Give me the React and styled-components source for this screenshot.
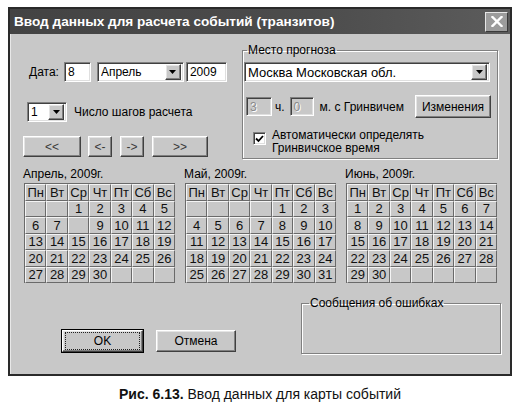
import React from "react";
import styled, { createGlobalStyle } from "styled-components";

const GlobalStyle = createGlobalStyle`
  html, body { margin: 0; padding: 0; background: #fff; }
  body {
    font-family: "Liberation Sans", Arial, sans-serif;
    font-size: 12px;
    color: #000;
  }
  * { box-sizing: border-box; }
`;

const FACE = "#c8c8c8";

const Page = styled.div`
  width: 519px;
  height: 409px;
  padding: 7px 0 0 8px;
`;

const Window = styled.div`
  width: 504px;
  height: 369px;
  border: 2px solid #2a2a2a;
  background: ${FACE};
  display: flex;
  flex-direction: column;
  box-shadow: inset 1px 1px 0 #e8e8e8;
`;

const TitleBar = styled.div`
  height: 25px;
  flex: none;
  display: flex;
  align-items: center;
  justify-content: space-between;
  padding: 0 2px 0 4px;
  background: linear-gradient(to right, #434343 0%, #4c4c4c 60%, #5c5c5c 100%);
  color: #fff;
  font-weight: bold;
  font-size: 13.6px;
`;

const CloseButton = styled.div`
  width: 23px;
  height: 20px;
  display: flex;
  align-items: center;
  justify-content: center;
  background: #9c9c9c;
  border: 1px solid;
  border-color: #e6e6e6 #3a3a3a #3a3a3a #e6e6e6;
`;

const Body = styled.div`
  flex: 1;
  display: flex;
  flex-direction: column;
  padding: 0 9px 0 14px;
`;

const TopSection = styled.div`
  display: flex;
  align-items: flex-start;
`;

const LeftColumn = styled.div`
  width: 218px;
  flex: none;
  padding-top: 28px;
  display: flex;
  flex-direction: column;
`;

const Row = styled.div`
  display: flex;
  align-items: center;
  height: ${(p) => p.$h || 20}px;
  margin-top: ${(p) => p.$mt || 0}px;
  margin-left: ${(p) => p.$ml || 0}px;
`;

const Label = styled.span`
  white-space: nowrap;
  margin-left: ${(p) => p.$ml || 0}px;
  margin-right: ${(p) => p.$mr || 0}px;
  font-size: ${(p) => p.$fs || 12}px;
`;

const sunken = `
  border: 1px solid;
  border-color: #808080 #ffffff #ffffff #808080;
  box-shadow: inset 1px 1px 0 #404040, inset -1px -1px 0 #dfdfdf;
`;

const raised = `
  border: 1px solid;
  border-color: #ffffff #404040 #404040 #ffffff;
  box-shadow: inset -1px -1px 0 #808080, inset 1px 1px 0 #e4e4e4;
`;

const TextBox = styled.div`
  ${sunken}
  width: ${(p) => p.$w}px;
  height: ${(p) => p.$h || 20}px;
  margin-left: ${(p) => p.$ml || 0}px;
  background: ${(p) => (p.$disabled ? FACE : "#fff")};
  color: ${(p) => (p.$disabled ? "#8a8a8a" : "#000")};
  text-shadow: ${(p) => (p.$disabled ? "1px 1px 0 #fff" : "none")};
  padding: 0 3px;
  display: flex;
  align-items: center;
  font-size: ${(p) => p.$fs || 12}px;
  white-space: nowrap;
  overflow: hidden;
`;

const Combo = styled.div`
  ${sunken}
  width: ${(p) => p.$w}px;
  height: 20px;
  background: #fff;
  display: flex;
  align-items: center;
  padding: 0 2px 0 3px;
  font-size: ${(p) => p.$fs || 12}px;
  margin-left: ${(p) => p.$ml || 0}px;
  margin-top: ${(p) => p.$mt || 0}px;
`;

const ComboText = styled.span`
  flex: 1;
  white-space: nowrap;
  overflow: hidden;
`;

const ComboArrow = styled.div`
  ${raised}
  width: 16px;
  height: 16px;
  background: ${FACE};
  display: flex;
  align-items: center;
  justify-content: center;
  flex: none;
`;

const Button = styled.div`
  ${raised}
  width: ${(p) => p.$w}px;
  height: ${(p) => p.$h || 21}px;
  background: ${FACE};
  display: flex;
  align-items: center;
  justify-content: center;
  font-size: 12px;
  color: ${(p) => (p.$muted ? "#3a3a3a" : "#000")};
  margin-left: ${(p) => (p.$push ? "auto" : `${p.$ml || 0}px`)};
  margin-right: ${(p) => p.$mr || 0}px;
  flex: none;
`;

const DefaultButton = styled(Button)`
  outline: 1px solid #000;
`;

const FocusRing = styled.span`
  border: 1px dotted #222;
  padding: 2px 28px;
  line-height: 12px;
`;

const Group = styled.fieldset`
  margin: ${(p) => p.$mt || 0}px 0 0 ${(p) => (p.$push ? "auto" : `${p.$ml || 0}px`)};
  padding: 0 0 ${(p) => p.$pb || 1}px 0;
  width: ${(p) => p.$w}px;
  height: ${(p) => (p.$h ? `${p.$h}px` : "auto")};
  border: 1px solid #808080;
  box-shadow: 1px 1px 0 #fff, inset 1px 1px 0 #fff;
  min-width: 0;
`;

const Legend = styled.legend`
  padding: 0 1px;
  margin-left: ${(p) => p.$ml || 3}px;
  font-size: 12px;
  line-height: 14px;
`;

const CheckRow = styled.div`
  display: flex;
  align-items: flex-start;
  margin: 11px 0 0 10px;
`;

const CheckBox = styled.div`
  ${sunken}
  width: 13px;
  height: 13px;
  background: #fff;
  margin-top: 3px;
  display: flex;
  align-items: center;
  justify-content: center;
  flex: none;
`;

const CheckText = styled.div`
  margin-left: 6px;
  line-height: 13px;
`;

const CalendarRow = styled.div`
  display: flex;
  justify-content: space-between;
  width: 473px;
  margin-top: 8px;
`;

const Month = styled.div`
  display: flex;
  flex-direction: column;
`;

const MonthTitle = styled.div`
  height: 14px;
  line-height: 14px;
  margin: 0 0 2px -1px;
  font-size: 12px;
`;

const DayGrid = styled.div`
  width: 151px;
  display: grid;
  grid-template-columns: repeat(7, 1fr);
  grid-auto-rows: 16.5px;
  border-top: 1px solid #6a6a6a;
  border-left: 1px solid #6a6a6a;
`;

const DayCell = styled.div`
  border-top: 1px solid #f4f4f4;
  border-left: 1px solid #f4f4f4;
  border-right: 1px solid #6a6a6a;
  border-bottom: 1px solid #6a6a6a;
  display: flex;
  align-items: center;
  justify-content: center;
  font-size: 13px;
  line-height: 1;
  color: #111;
`;

const BottomSection = styled.div`
  display: flex;
  align-items: flex-start;
  margin-top: 13px;
`;

const DialogButtons = styled.div`
  display: flex;
  gap: 13px;
  margin: 34px 0 0 38px;
`;

const Caption = styled.div`
  margin-top: 10px;
  width: 504px;
  text-align: center;
  font-size: 14px;
  color: #111;
  line-height: 16px;
`;

const Arrow = () => (
  <svg width="7" height="4" viewBox="0 0 7 4">
    <path d="M0 0h7L3.5 4z" fill="#000" />
  </svg>
);

const CloseGlyph = () => (
  <svg width="12" height="11" viewBox="0 0 12 11">
    <path d="M1.5 1l9 9M10.5 1l-9 9" stroke="#fff" strokeWidth="2.4" strokeLinecap="square" />
  </svg>
);

const Check = () => (
  <svg width="9" height="8" viewBox="0 0 9 8">
    <path d="M1 3.5l2.5 2.5L8 1" stroke="#000" strokeWidth="1.8" fill="none" />
  </svg>
);

const HEAD = ["Пн", "Вт", "Ср", "Чт", "Пт", "Сб", "Вс"];

const buildMonth = (offset, days, skip) => {
  const cells = [];
  for (let i = 0; i < offset; i++) cells.push("");
  for (let d = 1; d <= days; d++) cells.push(d === skip ? "" : d);
  while (cells.length < 35) cells.push("");
  return cells;
};

const MONTHS = [
  { title: "Апрель, 2009г.", cells: buildMonth(2, 30, 8) },
  { title: "Май, 2009г.", cells: buildMonth(4, 31) },
  { title: "Июнь, 2009г.", cells: buildMonth(0, 30) },
];

export default function App() {
  return (
    <>
      <GlobalStyle />
      <Page>
        <Window>
          <TitleBar>
            <span>Ввод данных для расчета событий (транзитов)</span>
            <CloseButton>
              <CloseGlyph />
            </CloseButton>
          </TitleBar>
          <Body>
            <TopSection>
              <LeftColumn>
                <Row $ml={5}>
                  <Label $mr={5}>Дата:</Label>
                  <TextBox $w={27}>8</TextBox>
                  <Combo $w={87} $ml={6}>
                    <ComboText>Апрель</ComboText>
                    <ComboArrow><Arrow /></ComboArrow>
                  </Combo>
                  <TextBox $w={41} $ml={2}>2009</TextBox>
                </Row>
                <Row $ml={3} $mt={20}>
                  <Combo $w={40}>
                    <ComboText>1</ComboText>
                    <ComboArrow><Arrow /></ComboArrow>
                  </Combo>
                  <Label $ml={7}>Число шагов расчета</Label>
                </Row>
                <Row $mt={14} $h={21} $ml={-1}>
                  <Button $w={58} $muted>&lt;&lt;</Button>
                  <Button $w={24} $ml={7} $muted>&lt;-</Button>
                  <Button $w={24} $ml={8} $muted>-&gt;</Button>
                  <Button $w={56} $ml={8} $muted>&gt;&gt;</Button>
                </Row>
              </LeftColumn>
              <Group $w={256} $mt={9} $pb={3}>
                <Legend $ml={4}>Место прогноза</Legend>
                <Combo $w={246} $fs={13} $ml={1} $mt={5}>
                  <ComboText>Москва Московская обл.</ComboText>
                  <ComboArrow><Arrow /></ComboArrow>
                </Combo>
                <Row $h={23} $mt={13} $ml={3}>
                  <TextBox $w={26} $h={19} $disabled>3</TextBox>
                  <Label $ml={3} $mr={5}>ч.</Label>
                  <TextBox $w={24} $h={19} $disabled>0</TextBox>
                  <Label $ml={6}>м. с Гринвичем</Label>
                  <Button $w={76} $h={23} $push $mr={6}>
                    Изменения
                  </Button>
                </Row>
                <CheckRow>
                  <CheckBox><Check /></CheckBox>
                  <CheckText>
                    Автоматически определять
                    <br />
                    Гринвичское время
                  </CheckText>
                </CheckRow>
              </Group>
            </TopSection>

            <CalendarRow>
              {MONTHS.map((m) => (
                <Month key={m.title}>
                  <MonthTitle>{m.title}</MonthTitle>
                  <DayGrid>
                    {HEAD.map((h) => (
                      <DayCell key={h}>{h}</DayCell>
                    ))}
                    {m.cells.map((c, i) => (
                      <DayCell key={i}>{c}</DayCell>
                    ))}
                  </DayGrid>
                </Month>
              ))}
            </CalendarRow>

            <BottomSection>
              <DialogButtons>
                <DefaultButton $w={81} $h={22}>
                  <FocusRing>OK</FocusRing>
                </DefaultButton>
                <Button $w={80} $h={22}>Отмена</Button>
              </DialogButtons>
              <Group $w={200} $h={58} $push>
                <Legend $ml={7}>Сообщения об ошибках</Legend>
              </Group>
            </BottomSection>
          </Body>
        </Window>
        <Caption>
          <b>Рис. 6.13.</b> Ввод данных для карты событий
        </Caption>
      </Page>
    </>
  );
}
